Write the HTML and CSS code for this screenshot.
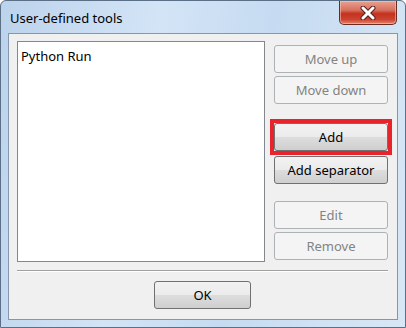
FILE: index.html
```html
<!DOCTYPE html>
<html lang="en">
<head>
  <meta charset="UTF-8">
  <title>User-defined tools</title>
  <link rel="stylesheet" href="styles.css">
</head>
<body>
  <div class="window">
    <div class="titlebar">
      <span class="title">User-defined tools</span>
      <div class="close">
        <svg width="20" height="14" viewBox="0 0 20 14">
          <path d="M5 2 L15 12 M15 2 L5 12" stroke="#5a1e18" stroke-width="5" stroke-linecap="round"/>
          <path d="M5 2 L15 12 M15 2 L5 12" stroke="#ffffff" stroke-width="3" stroke-linecap="round"/>
        </svg>
      </div>
    </div>

    <div class="client">
      <div class="main">
        <div class="listbox">
          <div class="item">Python Run</div>
        </div>
        <div class="buttons">
          <button class="btn" disabled>Move up</button>
          <button class="btn" disabled>Move down</button>
          <div class="highlight">
            <button class="btn">Add</button>
          </div>
          <button class="btn">Add separator</button>
          <div class="spacer"></div>
          <button class="btn" disabled>Edit</button>
          <button class="btn" disabled>Remove</button>
        </div>
      </div>
      <div class="separator"></div>
      <div class="footer">
        <button class="btn ok">OK</button>
      </div>
    </div>
  </div>
</body>
</html>
```

FILE: styles.css
```css
body {
  margin: 0;
  font-family: "Noto Sans", "Open Sans", sans-serif;
  background: #ffffff;
}

.window {
  width: 406px;
  height: 328px;
  box-sizing: border-box;
  border: 1px solid #5b6f86;
  border-radius: 6px 6px 0 0;
  background: linear-gradient(100deg, #bcd3ec 0%, #d3e4f6 35%, #c6dbf1 60%, #d8e7f6 100%);
  display: flex;
  flex-direction: column;
}

.titlebar {
  height: 32px;
  flex-shrink: 0;
  display: flex;
  align-items: flex-start;
  justify-content: space-between;
}

.title {
  font-size: 13px;
  color: #000;
  margin: 8px 0 0 9px;
}

.close {
  width: 56px;
  height: 23px;
  margin-right: 8px;
  border: 1px solid #6b2a22;
  border-top: none;
  border-radius: 0 0 5px 5px;
  background: linear-gradient(180deg, #e8a192 0%, #d8705e 40%, #c3321f 55%, #cc4330 80%, #e2846a 100%);
  display: flex;
  align-items: center;
  justify-content: center;
  box-shadow: inset 0 0 0 1px rgba(255, 210, 200, 0.5);
}

.client {
  flex: 1;
  margin: 0 7px 7px 7px;
  border: 1px solid #8497ad;
  background: #f0f0f0;
  padding: 7px 9px 10px 8px;
  display: flex;
  flex-direction: column;
}

.main {
  display: flex;
  gap: 9px;
}

.listbox {
  box-sizing: border-box;
  width: 248px;
  height: 221px;
  flex-shrink: 0;
  border: 1px solid #828790;
  background: #ffffff;
  padding: 0 3px;
}

.item {
  font-size: 13px;
  line-height: 17px;
  margin-top: 6px;
  color: #000;
}

.buttons {
  width: 114px;
  flex-shrink: 0;
  display: flex;
  flex-direction: column;
  gap: 3px;
  padding-top: 4px;
}

.btn {
  height: 28px;
  box-sizing: border-box;
  border: 1px solid #707070;
  border-radius: 3px;
  background: linear-gradient(180deg, #f2f2f2 0%, #ebebeb 50%, #dddddd 51%, #cfcfcf 100%);
  font-family: "Noto Sans", "Open Sans", sans-serif;
  font-size: 13px;
  color: #000;
  padding: 0;
}

.btn:disabled {
  border-color: #adb2b5;
  background: #f4f4f4;
  color: #838383;
}

.highlight {
  margin: 12px -4px -2px -4px;
  border: 4px solid #e8232b;
  display: flex;
  flex-direction: column;
}

.spacer {
  height: 11px;
}

.separator {
  margin-top: 8px;
  height: 0;
  border-top: 1px solid #a0a0a0;
  border-bottom: 1px solid #ffffff;
}

.footer {
  margin-top: 9px;
  display: flex;
  justify-content: center;
}

.ok {
  width: 97px;
}
```
